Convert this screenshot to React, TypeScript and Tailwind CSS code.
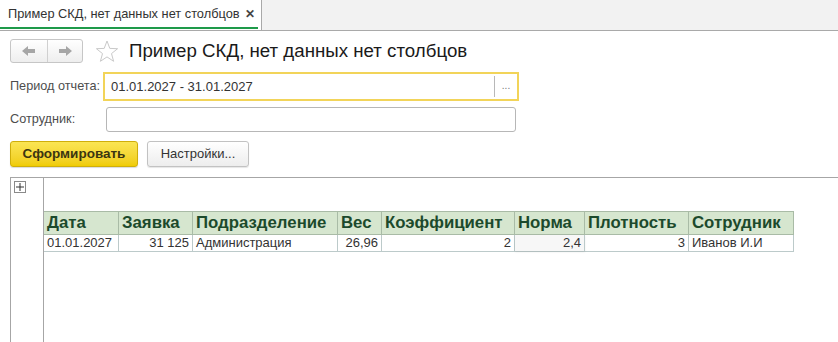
import React from "react";

const cols = [
  { title: "Дата", w: "w-[75px]", value: "01.01.2027", right: false },
  { title: "Заявка", w: "w-[74px]", value: "31 125", right: true },
  { title: "Подразделение", w: "w-[145px]", value: "Администрация", right: false },
  { title: "Вес", w: "w-[44px]", value: "26,96", right: true },
  { title: "Коэффициент", w: "w-[133px]", value: "2", right: true },
  { title: "Норма", w: "w-[70px]", value: "2,4", right: true },
  { title: "Плотность", w: "w-[104px]", value: "3", right: true },
  { title: "Сотрудник", w: "w-[105px]", value: "Иванов И.И", right: false },
];

function Arrow({ dir }: { dir: "left" | "right" }) {
  return (
    <svg width="14" height="10" viewBox="0 0 14 10" className={dir === "right" ? "rotate-180" : ""}>
      <path d="M0 5 L6 0 L6 3 L13 3 L13 7 L6 7 L6 10 Z" fill="#a6a6a6" />
    </svg>
  );
}

function Star() {
  return (
    <svg width="24" height="23" viewBox="0 0 24 23">
      <path
        d="M12 1 L14.8 8.4 L22.6 8.7 L16.5 13.6 L18.6 21.3 L12 16.9 L5.4 21.3 L7.5 13.6 L1.4 8.7 L9.2 8.4 Z"
        fill="none"
        stroke="#c9c9c9"
        strokeWidth="1"
      />
    </svg>
  );
}

export default function App() {
  return (
    <div className="w-[838px] h-[342px] overflow-hidden bg-white flex flex-col font-['Liberation_Sans',Arial,sans-serif] text-[#333]">
      {/* tab bar */}
      <div className="h-[31px] shrink-0 bg-[#f2f2f2] border-b border-[#a9a9a9] flex">
        <div className="w-[262px] bg-white border-r border-[#a9a9a9] flex flex-col">
          <div className="h-[27px] flex items-center pl-[8px] pr-[6px] text-[12.8px] text-[#333]">
            <span>Пример СКД, нет данных нет столбцов</span>
            <span className="ml-auto font-bold text-[12px] text-[#444]">✕</span>
          </div>
          <div className="h-[2px] mr-[3px] bg-[#1e9a4a]" />
        </div>
      </div>

      <div className="flex flex-col flex-1">
        {/* header */}
        <div className="flex items-center pl-[10px] pt-[8px] h-[32px]">
          <div className="flex h-[24px] w-[73px] border border-[#c6c6c6] rounded-[3px] bg-gradient-to-b from-white to-[#eeeeee]">
            <div className="w-[37px] flex items-center justify-center border-r border-[#d0d0d0]">
              <Arrow dir="left" />
            </div>
            <div className="flex-1 flex items-center justify-center">
              <Arrow dir="right" />
            </div>
          </div>
          <div className="ml-[12px] flex items-center">
            <Star />
          </div>
          <div className="ml-[10px] text-[18.7px] text-[#1a1a1a]">Пример СКД, нет данных нет столбцов</div>
        </div>

        {/* period */}
        <div className="flex items-center pl-[10px] mt-[9px] h-[29px]">
          <div className="w-[93px] text-[12.7px] text-[#4d4d4d]">Период отчета:</div>
          <div className="w-[416px] h-[29px] border-2 border-[#f2d459] flex items-center">
            <div className="flex-1 pl-[6px] text-[13px] text-[#333]">01.01.2027 - 31.01.2027</div>
            <div className="w-[23px] h-[21px] border-l border-[#b8b8b8] flex items-center justify-center text-[10px] text-[#777] pb-[3px]">
              ...
            </div>
          </div>
        </div>

        {/* employee */}
        <div className="flex items-center pl-[10px] mt-[6px] h-[25px]">
          <div className="w-[96px] text-[12.7px] text-[#4d4d4d]">Сотрудник:</div>
          <div className="w-[410px] h-[25px] border border-[#b7b7b7] rounded-[3px] bg-white" />
        </div>

        {/* buttons */}
        <div className="flex items-center pl-[10px] mt-[9px] gap-[9px]">
          <div className="w-[128px] h-[26px] rounded-[3px] border border-[#cfae0b] bg-gradient-to-b from-[#fbe553] to-[#f0cc00] flex items-center justify-center text-[13.5px] font-bold text-[#3b3510] shadow-[0_1px_1px_rgba(0,0,0,0.15)]">
            Сформировать
          </div>
          <div className="w-[102px] h-[26px] rounded-[3px] border border-[#c2c2c2] bg-gradient-to-b from-white to-[#ededed] flex items-center justify-center text-[13px] text-[#333] shadow-[0_1px_1px_rgba(0,0,0,0.1)]">
            Настройки...
          </div>
        </div>

        {/* report */}
        <div className="mt-[10px] ml-[10px] flex-1 flex border-t border-[#a6a6a6]">
          <div className="w-[33px] border-l border-[#a6a6a6] pl-[3px] pt-[3px]">
            <div className="w-[12px] h-[12px] border border-[#8a8a8a] flex items-center justify-center">
              <svg width="10" height="10" viewBox="0 0 10 10">
                <path d="M5 1 V9 M1 5 H9" stroke="#333" strokeWidth="1" />
              </svg>
            </div>
          </div>
          <div className="flex-1 border-l border-[#a6a6a6] pt-[33px]">
            <div className="flex h-[24px] border-y border-[#a9bba6] bg-[#d6e6cf] w-fit">
              {cols.map((c) => (
                <div
                  key={c.title}
                  className={`${c.w} border-r border-[#a9bba6] flex items-center pl-[3px] text-[16.8px] font-bold text-[#1c4a2c] whitespace-nowrap overflow-hidden`}
                >
                  {c.title}
                </div>
              ))}
            </div>
            <div className="flex h-[17px] border-b border-[#bccaca] w-fit">
              {cols.map((c) => (
                <div
                  key={c.title}
                  className={`${c.w} border-r border-[#bccaca] flex items-center text-[13px] text-[#333] ${
                    c.right ? "justify-end pr-[3px]" : "pl-[3px]"
                  } ${c.title === "Норма" ? "bg-[#f7f7f7] shadow-[0_1px_2px_rgba(0,0,0,0.08)]" : ""}`}
                >
                  {c.value}
                </div>
              ))}
            </div>
          </div>
        </div>
      </div>
    </div>
  );
}
